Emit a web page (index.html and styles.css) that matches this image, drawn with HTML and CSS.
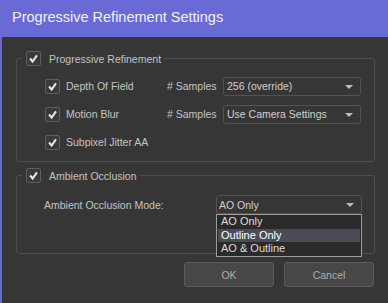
FILE: index.html
```html
<!DOCTYPE html>
<html lang="en">
<head>
  <link rel="stylesheet" href="styles.css">
</head>
<body>
  <div class="window">
    <div class="titlebar">Progressive Refinement Settings</div>

    <div class="dialog">
      <fieldset class="group group-progressive">
        <legend>
          <span class="check"><svg viewBox="0 0 15 15"><polyline points="3.5,7.5 6.5,11 11.5,4" /></svg></span>
          Progressive Refinement
        </legend>
        <div class="rows">
          <div class="row">
            <span class="check"><svg viewBox="0 0 15 15"><polyline points="3.5,7.5 6.5,11 11.5,4" /></svg></span>
            <span class="label">Depth Of Field</span>
            <span class="samples"># Samples</span>
            <div class="combo">256 (override)<span class="arrow"></span></div>
          </div>
          <div class="row">
            <span class="check"><svg viewBox="0 0 15 15"><polyline points="3.5,7.5 6.5,11 11.5,4" /></svg></span>
            <span class="label">Motion Blur</span>
            <span class="samples"># Samples</span>
            <div class="combo">Use Camera Settings<span class="arrow"></span></div>
          </div>
          <div class="row">
            <span class="check"><svg viewBox="0 0 15 15"><polyline points="3.5,7.5 6.5,11 11.5,4" /></svg></span>
            <span class="label">Subpixel Jitter AA</span>
          </div>
        </div>
      </fieldset>

      <fieldset class="group group-ao">
        <legend>
          <span class="check"><svg viewBox="0 0 15 15"><polyline points="3.5,7.5 6.5,11 11.5,4" /></svg></span>
          Ambient Occlusion
        </legend>
        <div class="mode-row">
          <span class="mode-label">Ambient Occlusion Mode:</span>
          <div class="combo combo-mode">AO Only<span class="arrow"></span>
            <ul class="popup">
              <li>AO Only</li>
              <li class="selected">Outline Only</li>
              <li>AO &amp; Outline</li>
            </ul>
          </div>
        </div>
      </fieldset>

      <div class="buttons">
        <button>OK</button>
        <button>Cancel</button>
      </div>
    </div>
  </div>
</body>
</html>
```

FILE: styles.css
```css
:root {
  --bg: #363636;
  --fg: #c4c4c4;
  --title-bg: #6a6ad6;
  --group-border: #4e4e4e;
  --combo-border: #535353;
  --popup-bg: #2a2a2a;
  --popup-border: #9c9c9c;
  --highlight: #4b4b56;
}

* {
  box-sizing: border-box;
}

body {
  margin: 0;
  background-color: var(--bg);
  color: var(--fg);
  font-family: "Liberation Sans", Arial, sans-serif;
  font-size: 10.5px;
}

.window {
  width: 388px;
  height: 303px;
  border-left: 2px solid var(--title-bg);
  background-color: var(--bg);
}

.titlebar {
  height: 37px;
  margin-left: -2px;
  padding: 0 0 3px 12px;
  display: flex;
  align-items: center;
  background-color: var(--title-bg);
  color: #f2f2fa;
  font-size: 14.5px;
}

.dialog {
  padding: 14px 13px 0 14px;
  display: flex;
  flex-direction: column;
}

.group {
  margin: 0;
  padding: 0;
  border: 1px solid var(--group-border);
  border-radius: 3px;
}

.group legend {
  margin-left: 5px;
  padding: 0 3px 0 4px;
  display: flex;
  align-items: center;
  gap: 8px;
  height: 15px;
}

.check {
  width: 15px;
  height: 15px;
  flex: none;
  border: 1px solid #5e5e5e;
  border-radius: 2px;
  background-color: #3a3a3a;
  display: flex;
}

.check svg {
  width: 13px;
  height: 13px;
  fill: none;
  stroke: #e6e6e6;
  stroke-width: 2.4;
}

.rows {
  padding: 10px 0 9px 28px;
  display: flex;
  flex-direction: column;
  gap: 8px;
}

.row {
  height: 20px;
  display: flex;
  align-items: center;
}

.row .label {
  margin-left: 6px;
  width: 101px;
}

.samples {
  width: 56px;
}

.combo {
  position: relative;
  width: 138px;
  height: 19px;
  padding-left: 3px;
  display: flex;
  align-items: center;
  border: 1px solid var(--combo-border);
  border-radius: 3px;
  color: #d0d0d0;
}

.arrow {
  position: absolute;
  right: 7px;
  top: 7px;
  border-left: 4px solid transparent;
  border-right: 4px solid transparent;
  border-top: 4px solid #bdbdbd;
}

.group-ao {
  margin-top: 6px;
}

.mode-row {
  padding: 12px 0 39px 27px;
  display: flex;
  align-items: center;
}

.mode-label {
  width: 172px;
}

.combo-mode {
  width: 146px;
  padding-left: 2px;
}

.popup {
  position: absolute;
  left: -1px;
  top: 18px;
  width: 146px;
  margin: 0;
  padding: 0 1px;
  list-style: none;
  background-color: var(--popup-bg);
  border: 1px solid var(--popup-border);
  color: #dcdcdc;
  font-size: 11px;
  z-index: 2;
}

.popup li {
  height: 13.5px;
  line-height: 13.5px;
  padding-left: 3px;
}

.popup li.selected {
  background-color: var(--highlight);
  color: #fff;
}

.buttons {
  margin-top: 8px;
  display: flex;
  justify-content: flex-end;
  gap: 10px;
  padding-right: 1px;
}

.buttons button {
  width: 90px;
  height: 25px;
  background-color: #474747;
  border: 1px solid #5b5b5b;
  border-radius: 3px;
  color: #acacac;
  font-family: "Liberation Sans", Arial, sans-serif;
  font-size: 10.5px;
}
```
